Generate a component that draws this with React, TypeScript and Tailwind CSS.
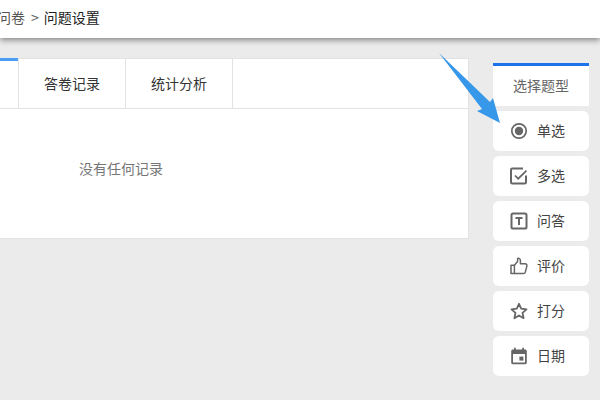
import { ReactNode } from "react";

const font = { fontFamily: '"Noto Sans CJK SC", sans-serif' };

const RadioIcon = () => (
    <svg width="18" height="18" viewBox="0 0 18 18">
        <circle cx="9" cy="9" r="7.2" fill="none" stroke="#666" strokeWidth="1.7" />
        <circle cx="9" cy="9" r="4.2" fill="#666" />
    </svg>
);

const CheckIcon = () => (
    <svg width="18" height="18" viewBox="0 0 18 18" fill="none" stroke="#666">
        <path d="M16 8.5V15.2a1.3 1.3 0 0 1-1.3 1.3H2.3A1.3 1.3 0 0 1 1 15.2V2.8A1.3 1.3 0 0 1 2.3 1.5H13" strokeWidth="2" />
        <path d="M5 8.5l3.2 3.2L16.5 3.6" strokeWidth="1.7" />
    </svg>
);

const TextIcon = () => (
    <svg width="18" height="18" viewBox="0 0 18 18" fill="none" stroke="#666">
        <rect x="1.5" y="1.5" width="15" height="15" rx="1.6" strokeWidth="2" />
        <path d="M5.5 6h7M9 6v7" strokeWidth="2" />
    </svg>
);

const ThumbIcon = () => (
    <svg width="18" height="18" viewBox="0 0 18 18" fill="none" stroke="#666" strokeWidth="1.5" strokeLinejoin="round">
        <path d="M1 8.2h3.4v8.4H1z" />
        <path d="M4.4 8.2 7.6 4.6V1.4c1.6-.5 2.8.6 2.8 2.2v3.2h4.8c1.2 0 2 1 1.7 2.1l-1.6 6.2c-.2.9-.9 1.5-1.8 1.5H4.4" />
    </svg>
);

const StarIcon = () => (
    <svg width="18" height="18" viewBox="0 0 18 18" fill="none" stroke="#666" strokeWidth="1.8" strokeLinejoin="round">
        <path d="M9 1.8l2.2 4.9 5.3.6-4 3.6 1.1 5.3L9 13.5l-4.6 2.7 1.1-5.3-4-3.6 5.3-.6z" />
    </svg>
);

const CalendarIcon = () => (
    <svg width="18" height="18" viewBox="0 0 18 18" fill="#666">
        <path d="M4 .8h1.8v1.6h6.4V.8H14v1.6h1.2c1 0 1.6.7 1.6 1.6v11.6c0 1-.7 1.6-1.6 1.6H2.8c-1 0-1.6-.7-1.6-1.6V4c0-1 .7-1.6 1.6-1.6H4zM3 7v8.4h12V7z" />
        <rect x="9.4" y="9.6" width="4" height="4" />
    </svg>
);

const TypeButton = ({ icon, label }: { icon: ReactNode; label: string }) => (
    <div className="h-10 bg-white rounded-md flex items-center pl-[17px] gap-[9px] text-[14px] text-[#444]">
        {icon}
        <span className="pb-[2px]">{label}</span>
    </div>
);

const types = [
    { icon: <RadioIcon />, label: "单选" },
    { icon: <CheckIcon />, label: "多选" },
    { icon: <TextIcon />, label: "问答" },
    { icon: <ThumbIcon />, label: "评价" },
    { icon: <StarIcon />, label: "打分" },
    { icon: <CalendarIcon />, label: "日期" },
];

export default function App() {
    return (
        <div className="relative w-[600px] h-[400px] overflow-hidden bg-[#ebebeb]" style={font}>
            {/* Header */}
            <div className="h-[38px] pb-1 bg-white flex items-center text-[14px] text-[#222] shadow-[0_2px_6px_rgba(0,0,0,0.45)]">
                <span className="-ml-[3px] text-[#555]">问卷</span>
                <span className="ml-[6px] mr-[5px] text-[#555]">&gt;</span>
                <span>问题设置</span>
            </div>

            <div className="flex items-start">
                {/* Panel */}
                <div className="w-[469px] h-[181px] mt-[20px] bg-white border border-l-0 border-[#e3e3e3]">
                    <div className="flex h-[50px] border-b border-[#e3e3e3]">
                        <div className="w-[18px] -mt-px h-[3px] bg-[#4a9ff5]" />
                        <div className="w-[108px] border-l border-r border-[#e3e3e3] flex items-center justify-center text-[14px] text-[#333]">
                            答卷记录
                        </div>
                        <div className="w-[107px] border-r border-[#e3e3e3] flex items-center justify-center text-[14px] text-[#333]">
                            统计分析
                        </div>
                    </div>
                    <div className="pl-[79px] pt-[49px] text-[14px] leading-[20px] text-[#777]">没有任何记录</div>
                </div>

                {/* Question types */}
                <div className="w-[96px] ml-[24px] mt-[25px] flex flex-col gap-[5px]">
                    <div className="h-[43px] pb-[2px] bg-white border-t-[3px] border-[#1a73e8] flex items-center justify-center text-[14px] text-[#666]">
                        选择题型
                    </div>
                    {types.map((t) => (
                        <TypeButton key={t.label} icon={t.icon} label={t.label} />
                    ))}
                </div>
            </div>

            {/* Arrow */}
            <svg className="absolute left-[438px] top-[52px]" width="66" height="72" viewBox="0 0 66 72">
                <path d="M1 1 L52 50 L55 46 L62 71 L39 59 L44 57 Z" fill="#3797e8" />
            </svg>
        </div>
    );
}
